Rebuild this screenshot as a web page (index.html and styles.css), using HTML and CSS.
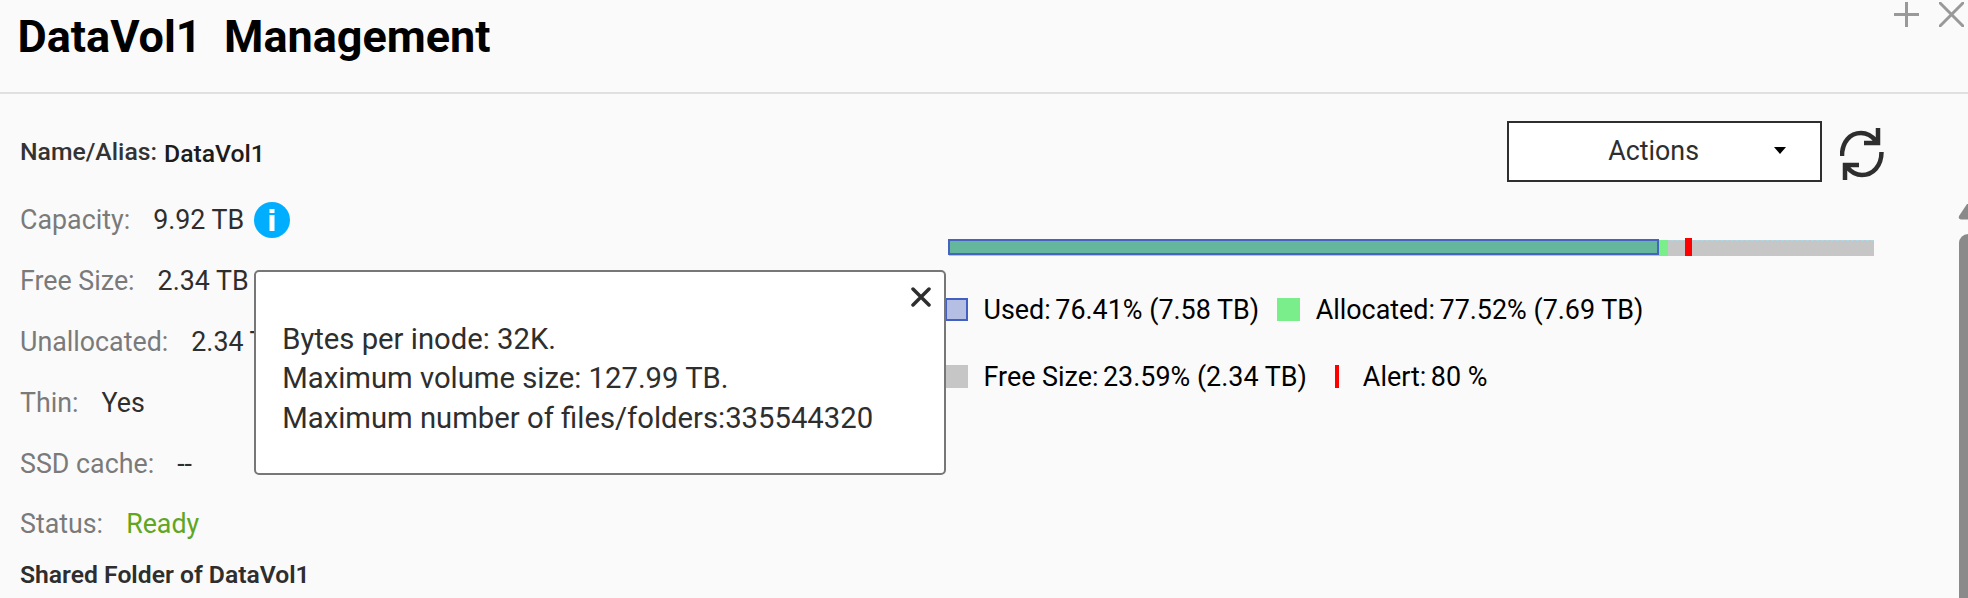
FILE: index.html
```
<!DOCTYPE html>
<html lang="en">
<head>
  <meta charset="UTF-8">
  <meta name="viewport" content="width=device-width, initial-scale=1.0">
  <title>DataVol1 Management</title>
  <link rel="stylesheet" href="styles.css">
</head>
<body>

  <header class="header">
    <h1>DataVol1 &nbsp;Management</h1>
    <div class="window-buttons">
      <svg width="25" height="25" viewBox="0 0 25 25"><path d="M12.5 0v25M0 12.5h25"/></svg>
      <svg width="25" height="25" viewBox="0 0 25 25"><path d="M0 0l25 25M25 0L0 25"/></svg>
    </div>
  </header>

  <main class="content">
    <section class="details">
      <div class="row name"><span>Name/Alias:</span><b>DataVol1</b></div>
      <div class="row"><span class="label">Capacity:</span>9.92 TB
        <div class="info">
          <svg width="36" height="36" viewBox="0 0 36 36"><circle cx="18" cy="18" r="18" fill="#00aeff"/><path d="M15.500 7h5v4h-5zM15.500 13h5v16h-5z" fill="#fff"/></svg>
          <div class="tooltip">
            <svg class="tooltip-close" width="20" height="20" viewBox="0 0 20 20"><path d="M2 2l16 16M18 2L2 18"/></svg>
            <p>Bytes per inode: 32K.</p>
            <p>Maximum volume size: 127.99 TB.</p>
            <p>Maximum number of files/folders:335544320</p>
          </div>
        </div>
      </div>
      <div class="row"><span class="label">Free Size:</span>2.34 TB</div>
      <div class="row"><span class="label">Unallocated:</span>2.34 TB</div>
      <div class="row"><span class="label">Thin:</span>Yes</div>
      <div class="row"><span class="label">SSD cache:</span>--</div>
      <div class="row"><span class="label">Status:</span><span class="ready">Ready</span></div>
      <h2>Shared Folder of DataVol1</h2>
    </section>

    <section class="usage">
      <div class="toolbar">
        <button type="button" class="actions">Actions<i class="caret"></i></button>
        <svg class="refresh" width="44" height="52" viewBox="0 0 44 52"><path d="M2 28C2 14 10 5 21 5c7 0 11 3 15 8M38 0v15H24M41.500 24c0 14-8.500 23-19.500 23-6 0-11-3-15-8M5 52V37h14"/></svg>
      </div>
      <div class="bar">
        <div class="allocated" style="width: 77.52%"></div>
        <div class="used" style="width: 76.41%"></div>
        <div class="alert" style="left: 80%"></div>
      </div>
      <div class="legend">
        <i class="key key-used"></i><span>Used:</span><span>76.41% (7.58 TB)</span>
        <i class="key key-allocated"></i><span>Allocated:</span><span>77.52% (7.69 TB)</span>
      </div>
      <div class="legend">
        <i class="key key-free"></i><span>Free Size:</span><span>23.59% (2.34 TB)</span>
        <i class="key key-alert"></i><span>Alert:</span><span>80 %</span>
      </div>
    </section>

    <aside class="scrollbar">
      <svg width="10" height="16" viewBox="0 0 10 16"><path d="M10 0H9L1 12q-1 3 2 3.500h7z" fill="#8a8a8a"/></svg>
      <div class="thumb"></div>
    </aside>
  </main>

</body>
</html>
```

FILE: styles.css
```
* { box-sizing: border-box; }
body { margin: 0; height: 598px; overflow: hidden; background-color: #fafafa; color: #2e2e2e; font-family: Roboto, sans-serif; font-size: 26.800px; }
h1, h2, p { margin: 0; }

.header { display: flex; justify-content: space-between; height: 94px; padding-left: 17.500px; border-bottom: 2px solid #e0e0e0; }
.header h1 { color: #000; font-size: 45px; font-weight: 700; line-height: 74px; }
.window-buttons { display: flex; gap: 20px; padding: 2px 4px 0 0; }
.window-buttons svg { stroke: #999; stroke-width: 3; }

.content { display: flex; height: 504px; }
.details { width: 945px; padding: 28px 0 0 20px; }
.row { display: flex; align-items: center; height: 60.900px; white-space: nowrap; }
.row .label { margin-right: 23px; color: #7a7a7a; }
.row .ready { color: #60a61e; }
.row.name { height: 67.500px; padding-bottom: 9px; gap: 7px; color: #333; font-size: 24.750px; font-weight: 500; }
.row.name b { padding-top: 4px; color: #1c1c1c; font-weight: 500; }
.details h2 { font-size: 24.700px; font-weight: 600; line-height: 40px; }

.info { position: relative; height: 36px; margin-left: 10px; }
.info svg { display: block; }
.tooltip { position: absolute; z-index: 1; top: 68px; left: 0; width: 692px; height: 205px; padding: 48px 26px; border: 2px solid #777; border-radius: 5px; background-color: #fff; font-size: 29.250px; line-height: 39.500px; }
.tooltip .tooltip-close { position: absolute; top: 15px; right: 13px; stroke: #2e2e2e; stroke-width: 3.500; stroke-linecap: round; }

.usage { width: 929px; color: #000; }
.toolbar { display: flex; justify-content: flex-end; gap: 18px; padding-top: 27px; margin-right: -10px; }
.actions { display: flex; align-items: center; justify-content: flex-end; width: 315px; height: 61px; padding: 0 34px 2px 0; gap: 75px; border: 2px solid #2e2e2e; background-color: #fff; color: #2e2e2e; font: inherit; cursor: pointer; }
.caret { border: 6px solid transparent; border-top: 7px solid #000; border-bottom: 0; }
.refresh { margin-top: 7px; fill: none; stroke: #2e2e2e; stroke-width: 4.500; }

.bar { position: relative; height: 16px; margin: 58px 0 20px 4px; border-top: 1px dashed #add8e6; background-color: #c6c6c6; }
.bar .allocated { box-sizing: content-box; height: 16px; margin-top: -1px; padding-right: 2px; background-color: #79ee8b; }
.bar .used { position: absolute; top: -2px; left: -1px; box-sizing: content-box; height: 12px; border: 2px solid #4663bf; background-color: #64b79c; }
.bar .alert { position: absolute; top: -3px; width: 7px; height: 18px; margin-left: -4px; background-color: #f00; }

.legend { display: flex; align-items: center; height: 67px; font-size: 26.900px; white-space: nowrap; }
.legend span + span { margin-left: 4.500px; }
.key { width: 23px; height: 23px; margin-right: 15.500px; }
.legend span + .key { margin-left: 18px; }
.key-used { border: 2px solid #4360c0; background-color: #b5bfe3; }
.key-allocated { background-color: #79ee8b; }
.key-free { background-color: #c6c6c6; }
.legend span + .key-alert { width: 4px; margin: 0 24px 0 28px; background-color: #f00; }

.scrollbar { display: flex; flex-direction: column; flex: 1; align-items: flex-end; padding-top: 110px; gap: 14px; }
.thumb { width: 9px; flex: 1; border-top-left-radius: 9px; background-color: #8a8a8a; }
```
